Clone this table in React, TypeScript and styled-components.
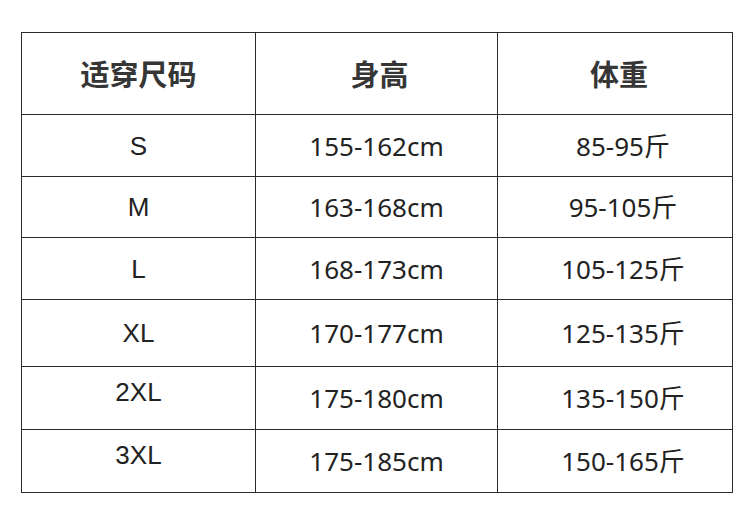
import styled, { createGlobalStyle } from "styled-components";

const GlobalStyle = createGlobalStyle`
  html, body {
    margin: 0;
    padding: 0;
    background: #ffffff;
  }
`;

const Page = styled.div`
  width: 750px;
  height: 525px;
  box-sizing: border-box;
  padding: 32px 0 0 21px;
  background: #ffffff;
`;

const Table = styled.div`
  display: flex;
  flex-direction: column;
  width: 712px;
  box-sizing: border-box;
  border-top: 1px solid #2b2b2b;
  border-left: 1px solid #2b2b2b;
`;

const Row = styled.div<{ $h: number }>`
  display: grid;
  grid-template-columns: 234px 242px 235px;
  height: ${(p) => p.$h}px;
`;

const Cell = styled.div<{ $shift?: number; $lift?: number; $head?: boolean; $latin?: boolean }>`
  display: flex;
  align-items: center;
  justify-content: center;
  box-sizing: border-box;
  border-right: 1px solid #2b2b2b;
  border-bottom: 1px solid #2b2b2b;
  padding-left: ${(p) => (p.$shift ?? 0) * 2}px;
  padding-bottom: ${(p) => (p.$lift ?? 0) * 2}px;
  font-family: ${(p) =>
    p.$latin
      ? `"Liberation Sans", "Noto Sans CJK SC", sans-serif`
      : `"Noto Sans", "Noto Sans CJK SC", sans-serif`};
  font-size: ${(p) => (p.$head ? 29 : 26)}px;
  font-weight: ${(p) => (p.$head ? 700 : 400)};
  color: ${(p) => (p.$head ? "#363636" : "#222222")};
  line-height: 1;
`;

const HeadText = styled.span`
  font-family: "Noto Sans CJK SC", sans-serif;
`;

const rows = [
  { size: "S", height: "155-162cm", weight: "85-95斤", h: 62 },
  { size: "M", height: "163-168cm", weight: "95-105斤", h: 61 },
  { size: "L", height: "168-173cm", weight: "105-125斤", h: 62 },
  { size: "XL", height: "170-177cm", weight: "125-135斤", h: 67 },
  { size: "2XL", height: "175-180cm", weight: "135-150斤", h: 63, lift: 6 },
  { size: "3XL", height: "175-185cm", weight: "150-165斤", h: 63, lift: 6 },
];

const App = () => {
  return (
    <>
      <GlobalStyle />
      <Page>
        <Table>
          <Row $h={82}>
            <Cell $head>
              <HeadText>适穿尺码</HeadText>
            </Cell>
            <Cell $head $shift={3}>
              <HeadText>身高</HeadText>
            </Cell>
            <Cell $head $shift={4}>
              <HeadText>体重</HeadText>
            </Cell>
          </Row>
          {rows.map((r) => (
            <Row key={r.size} $h={r.h}>
              <Cell $latin $lift={r.lift}>
                {r.size}
              </Cell>
              <Cell>{r.height}</Cell>
              <Cell $shift={8}>{r.weight}</Cell>
            </Row>
          ))}
        </Table>
      </Page>
    </>
  );
};

export default App;
